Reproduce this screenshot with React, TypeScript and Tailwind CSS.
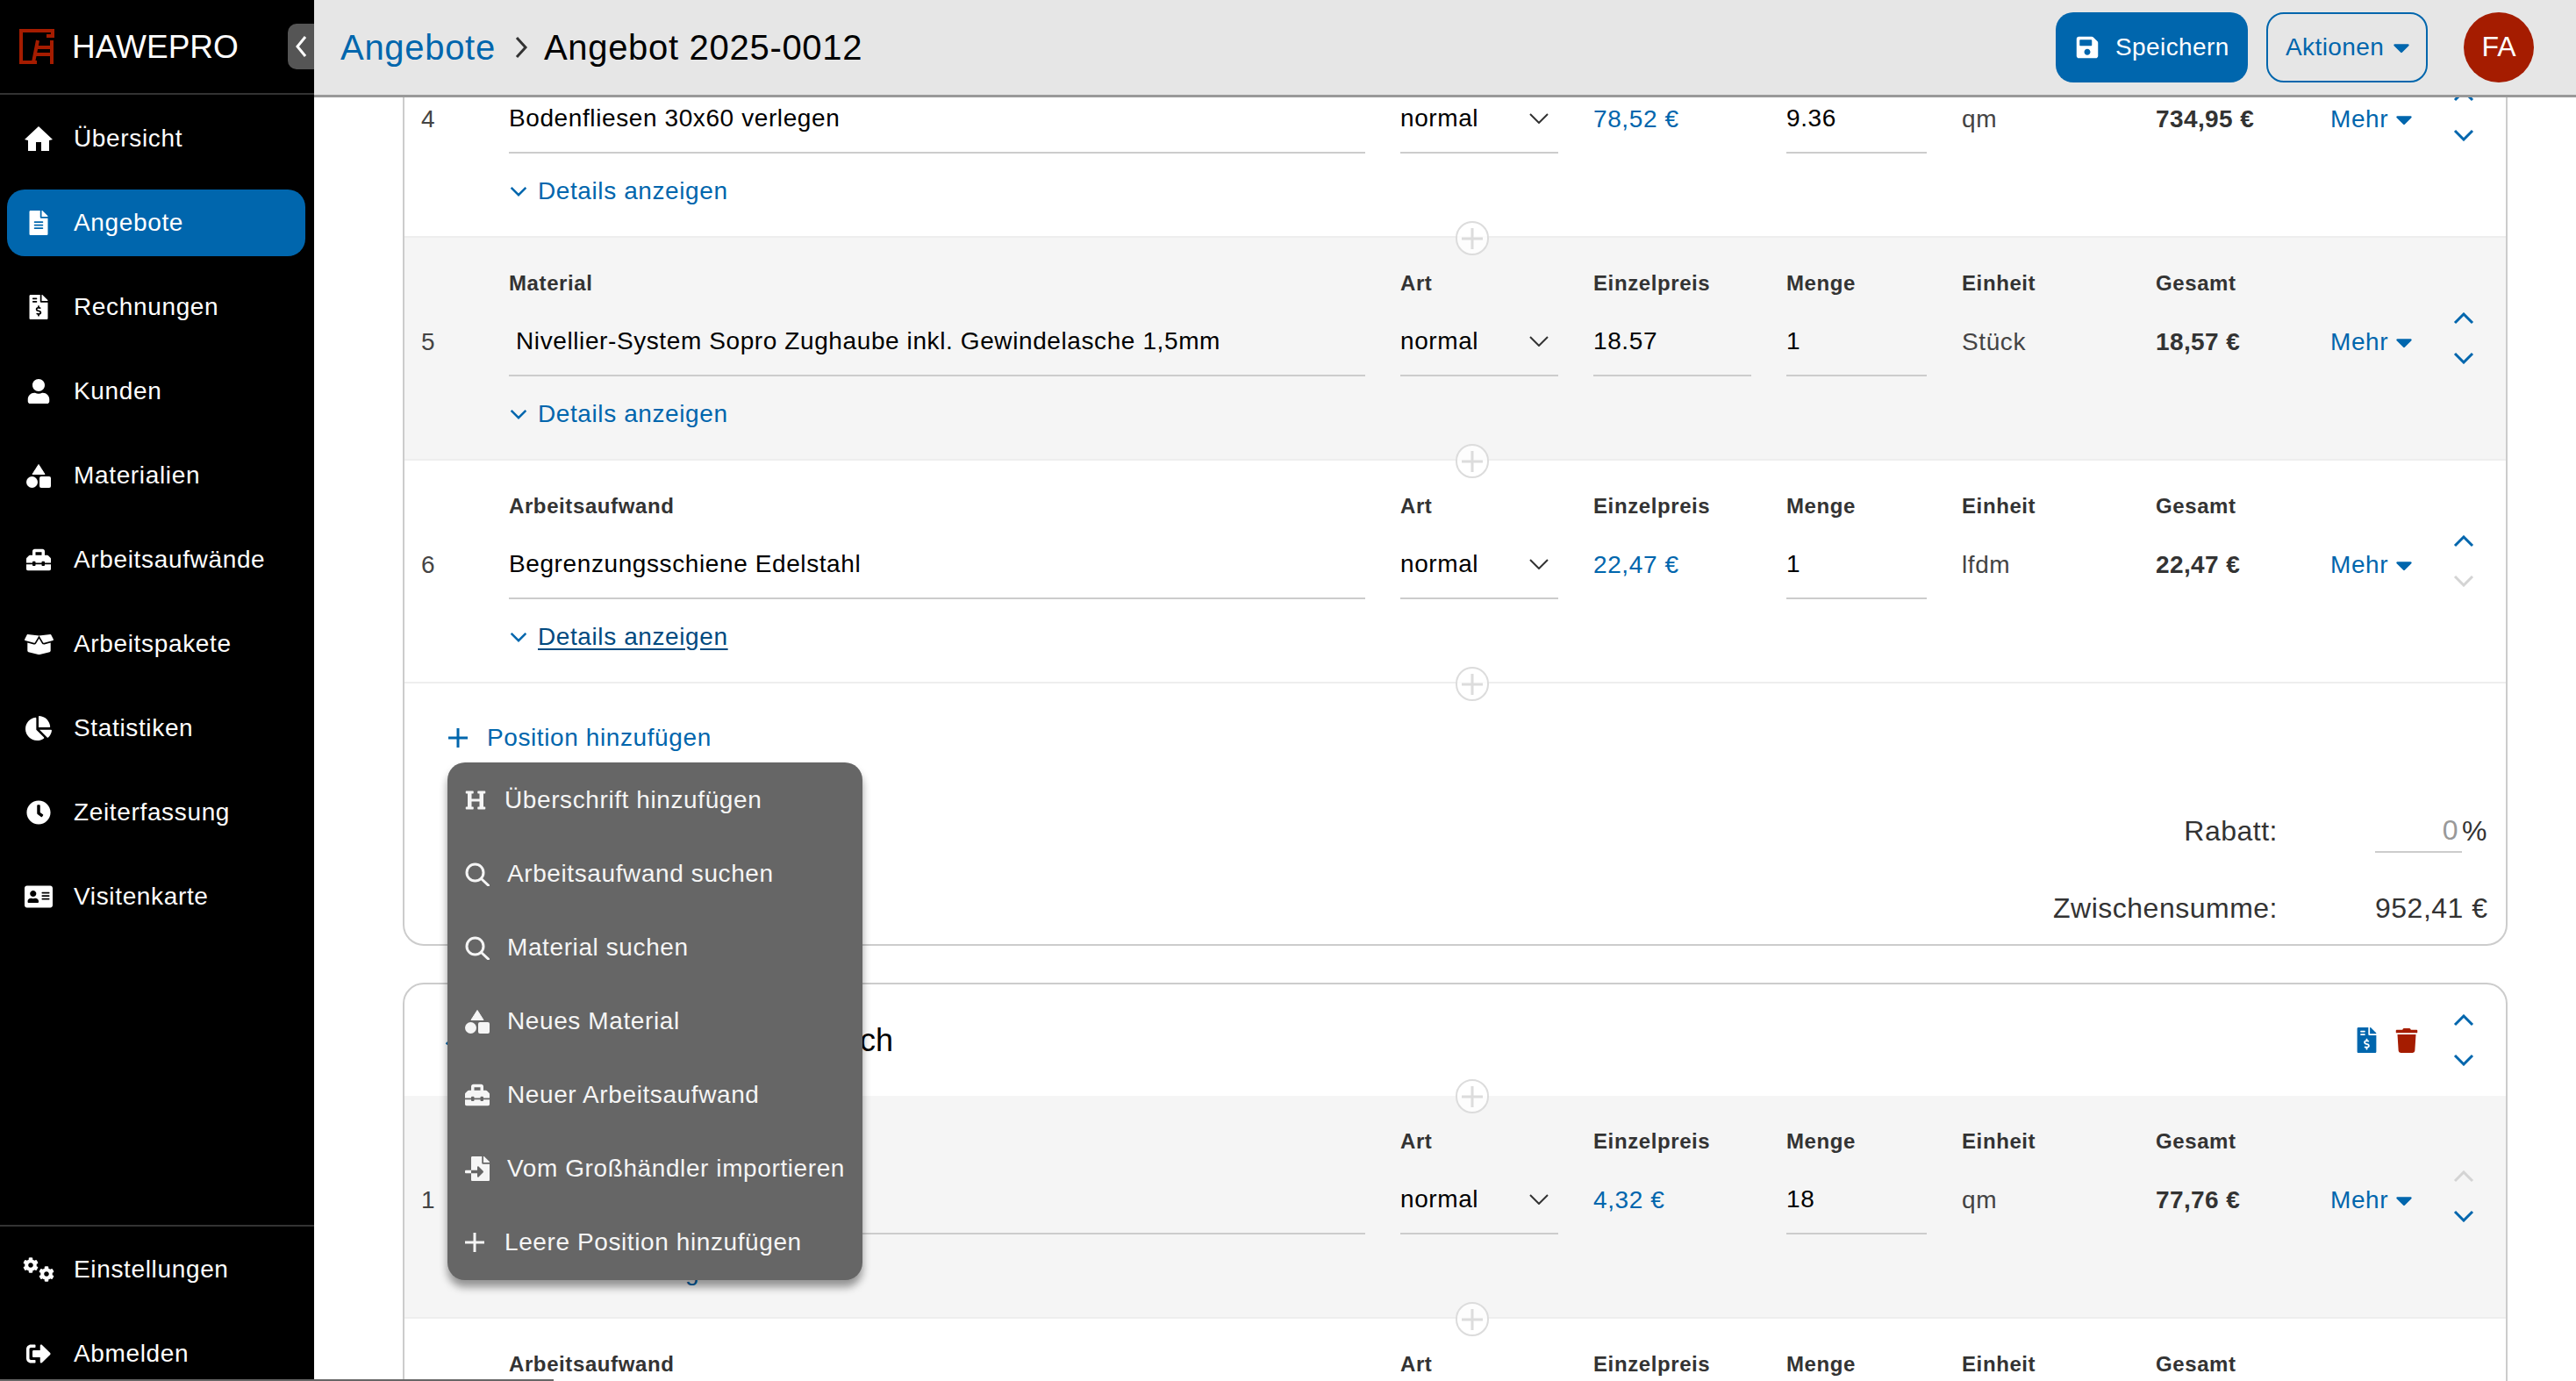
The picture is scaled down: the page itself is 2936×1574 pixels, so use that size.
import type { ReactNode } from 'react';
import {
  FaFileAlt, FaFileInvoiceDollar, FaUser, FaToolbox, FaBoxOpen, FaChartPie,
  FaClock, FaAddressCard, FaCog, FaSignOutAlt, FaSave, FaCaretDown, FaHeading,
  FaFileImport, FaTrash,
} from 'react-icons/fa';

const font = { fontFamily: '"Liberation Sans", Arial, sans-serif' };

function Chev({ down, muted, small }: { down?: boolean; muted?: boolean; small?: boolean }) {
  return (
    <svg
      viewBox="0 0 24 14"
      className={`${small ? 'w-[20px] h-[12px]' : 'w-[24px] h-[14px]'} ${down ? 'rotate-180' : ''} ${muted ? 'text-[#d4d4d4]' : 'text-[#0066ad]'}`}
      fill="none"
      stroke="currentColor"
      strokeWidth="3"
    >
      <path d="M2 12 L12 2 L22 12" />
    </svg>
  );
}

function PlusMark({ size, stroke, color }: { size: number; stroke: number; color: string }) {
  const mid = size / 2;
  return (
    <svg width={size} height={size} fill="none" stroke={color} strokeWidth={stroke} className="shrink-0">
      <path d={`M${mid} 0V${size}M0 ${mid}H${size}`} />
    </svg>
  );
}

function ShapesIcon() {
  return (
    <svg width="28" height="27" viewBox="0 0 28 27" fill="currentColor" className="shrink-0">
      <path d="M14 0.5 L21 11.5 H7 Z" stroke="currentColor" strokeWidth="1" strokeLinejoin="round" />
      <circle cx="6.5" cy="20.5" r="6.5" />
      <rect x="15" y="14" width="13" height="13" rx="2" />
    </svg>
  );
}

function HomeIcon() {
  return (
    <svg width="32" height="28" viewBox="0 0 32 28" fill="currentColor" className="shrink-0">
      <path d="M16 0 L32 15 L28 16 V28 H19 V18 H13 V28 H4 V16 L0 15 Z" />
    </svg>
  );
}

function SearchIcon() {
  return (
    <svg width="28" height="27" viewBox="0 0 28 27" fill="none" stroke="currentColor" strokeWidth="3" className="shrink-0">
      <circle cx="11.5" cy="11.5" r="9.5" />
      <path d="M18.5 18.5 L26.5 26" strokeLinecap="round" />
    </svg>
  );
}

function AddCircle({ flush }: { flush?: boolean }) {
  return (
    <div className={`absolute left-[1198px] z-10 w-[38px] h-[39px] rounded-full border-2 border-[#dcdcdc] bg-white/80 flex items-center justify-center ${flush ? '-bottom-[20px]' : '-bottom-[22px]'}`}>
      <PlusMark size={24} stroke={3} color="#dcdcdc" />
    </div>
  );
}

const navItems = [
  { label: 'Übersicht', icon: <HomeIcon /> },
  { label: 'Angebote', icon: <FaFileAlt size={28} />, active: true },
  { label: 'Rechnungen', icon: <FaFileInvoiceDollar size={28} /> },
  { label: 'Kunden', icon: <FaUser size={28} /> },
  { label: 'Materialien', icon: <ShapesIcon /> },
  { label: 'Arbeitsaufwände', icon: <FaToolbox size={28} /> },
  { label: 'Arbeitspakete', icon: <FaBoxOpen size={33} /> },
  { label: 'Statistiken', icon: <FaChartPie size={30} /> },
  { label: 'Zeiterfassung', icon: <FaClock size={28} /> },
  { label: 'Visitenkarte', icon: <FaAddressCard size={32} /> },
];

function NavItem({ label, icon, active }: { label: string; icon: ReactNode; active?: boolean }) {
  return (
    <div className={`ml-[8px] mr-[10px] h-[76px] shrink-0 flex items-center rounded-[20px] text-white text-[28px] tracking-[0.65px] ${active ? 'bg-[#0066ad]' : ''}`}>
      <div className="w-[72px] flex justify-center">{icon}</div>
      <span className="ml-[4px]">{label}</span>
    </div>
  );
}

function Sidebar() {
  return (
    <aside className="w-[358px] shrink-0 bg-black flex flex-col overflow-hidden">
      <div className="h-[108px] shrink-0 border-b-2 border-[#333] flex items-start pl-[22px] pt-[27px]">
        <svg width="40" height="40" viewBox="0 0 40 40" fill="none" stroke="#a51c00" strokeWidth="4" className="mt-[6px] shrink-0">
          <path d="M20 38H2V2H38V8H31" />
          <path d="M21 13L16 38M37 13V40M18 21H37M17 29H37" />
        </svg>
        <span className="ml-[20px] mt-[6px] text-white text-[37px] leading-[42px]">HAWEPRO</span>
        <div className="ml-auto w-[30px] h-[52px] bg-[#555] rounded-l-[10px] flex items-center justify-center">
          <svg width="14" height="26" viewBox="0 0 14 26" fill="none" stroke="white" strokeWidth="3">
            <path d="M12 2L3 13L12 24" />
          </svg>
        </div>
      </div>
      <nav className="flex-1 min-h-0 flex flex-col gap-[20px] pt-[12px]">
        {navItems.map((item) => (
          <NavItem key={item.label} {...item} />
        ))}
      </nav>
      <div className="h-[178px] shrink-0 border-t-2 border-[#333] flex flex-col gap-[20px] pt-[11px]">
        <NavItem
          label="Einstellungen"
          icon={
            <div className="w-[36px] h-[28px] flex justify-between">
              <FaCog size={18} className="self-start" />
              <FaCog size={18} className="self-end" />
            </div>
          }
        />
        <NavItem label="Abmelden" icon={<FaSignOutAlt size={28} />} />
      </div>
    </aside>
  );
}

function Header() {
  return (
    <header className="h-[111px] shrink-0 bg-[#e6e6e6] border-b-[3px] border-[#999] flex items-center pl-[30px] pr-[48px]">
      <span className="text-[#0066ad] text-[40px] tracking-[0.7px]">Angebote</span>
      <svg width="16" height="26" viewBox="0 0 16 26" fill="none" stroke="#333" strokeWidth="3" className="ml-[21px]">
        <path d="M3 2L13 13L3 24" />
      </svg>
      <span className="ml-[18px] text-black text-[40px] tracking-[0.7px]">Angebot 2025-0012</span>
      <button className="ml-auto w-[219px] h-[80px] rounded-[20px] bg-[#0066ad] text-white text-[28px] tracking-[0.4px] flex items-center pl-[22px]">
        <FaSave size={28} />
        <span className="ml-[18px]">Speichern</span>
      </button>
      <button className="ml-[21px] w-[184px] h-[80px] rounded-[20px] border-2 border-[#0066ad] text-[#0066ad] text-[28px] tracking-[0.4px] flex items-center pl-[20px]">
        Aktionen
        <FaCaretDown size={30} className="ml-[5px]" />
      </button>
      <div className="ml-[41px] w-[80px] h-[80px] rounded-full bg-[#a51c00] text-white text-[32px] flex items-center justify-center pb-[2px]">
        FA
      </div>
    </header>
  );
}

type RowProps = {
  nr: number;
  type: string;
  name: string;
  indent?: boolean;
  price: string;
  priceLink?: boolean;
  qty: string;
  unit: string;
  total: string;
  grey?: boolean;
  upMuted?: boolean;
  downMuted?: boolean;
  hoverDetails?: boolean;
};

function Label({ children }: { children: ReactNode }) {
  return <div className="h-[30px] leading-[30px] text-[24px] font-bold tracking-[0.6px] text-[#333]">{children}</div>;
}

function Row(p: RowProps) {
  const valueBox = 'mt-[13px] h-[78px] flex items-center text-[28px] tracking-[0.6px]';
  return (
    <div className={`relative h-[254px] shrink-0 flex pl-[19px] pt-[37px] border-b-2 border-[#eeeeee] ${p.grey ? 'bg-[#f5f5f5]' : 'bg-white'}`}>
      <div className="w-[100px] shrink-0">
        <div className="h-[30px]" />
        <div className={`${valueBox} text-[#444]`}>{p.nr}</div>
      </div>
      <div className="w-[976px] shrink-0 mr-[40px]">
        <Label>{p.type}</Label>
        <div className={`${valueBox} text-black border-b-2 border-[#cccccc] ${p.indent ? 'pl-[8px]' : ''}`}>{p.name}</div>
        <div className={`mt-[28px] h-[30px] flex items-center text-[28px] tracking-[0.6px] w-fit ${p.hoverDetails ? 'text-[#004a80] underline underline-offset-4' : 'text-[#0066ad]'}`}>
          <span className="ml-[1px] mr-[12px]"><Chev down small /></span>
          Details anzeigen
        </div>
      </div>
      <div className="w-[180px] shrink-0 mr-[40px]">
        <Label>Art</Label>
        <div className={`${valueBox} text-black justify-between border-b-2 border-[#cccccc]`}>
          normal
          <svg width="22" height="12" viewBox="0 0 22 12" fill="none" stroke="#333" strokeWidth="2" className="mr-[11px]">
            <path d="M1 1L11 11L21 1" />
          </svg>
        </div>
      </div>
      <div className="w-[180px] shrink-0 mr-[40px]">
        <Label>Einzelpreis</Label>
        <div className={`${valueBox} ${p.priceLink ? 'text-[#0066ad]' : 'text-black border-b-2 border-[#cccccc]'}`}>{p.price}</div>
      </div>
      <div className="w-[160px] shrink-0 mr-[40px]">
        <Label>Menge</Label>
        <div className={`${valueBox} text-black border-b-2 border-[#cccccc]`}>{p.qty}</div>
      </div>
      <div className="w-[221px] shrink-0">
        <Label>Einheit</Label>
        <div className={`${valueBox} text-[#444]`}>{p.unit}</div>
      </div>
      <div className="w-[199px] shrink-0">
        <Label>Gesamt</Label>
        <div className={`${valueBox} font-bold text-[#333] !tracking-[0.4px]`}>{p.total}</div>
      </div>
      <div className="w-[140px] shrink-0">
        <div className="h-[30px]" />
        <div className={`${valueBox} text-[#0066ad]`}>
          Mehr
          <FaCaretDown size={30} className="ml-[3px]" />
        </div>
      </div>
      <div className="w-[24px] shrink-0 pt-[41px] flex flex-col items-center gap-[17px]">
        <div className="h-[28px] flex items-center"><Chev muted={p.upMuted} /></div>
        <div className="h-[28px] flex items-center"><Chev down muted={p.downMuted} /></div>
      </div>
      <AddCircle />
    </div>
  );
}

const menuItems = [
  { label: 'Überschrift hinzufügen', icon: <FaHeading size={24} />, narrow: true },
  { label: 'Arbeitsaufwand suchen', icon: <SearchIcon /> },
  { label: 'Material suchen', icon: <SearchIcon /> },
  { label: 'Neues Material', icon: <ShapesIcon /> },
  { label: 'Neuer Arbeitsaufwand', icon: <FaToolbox size={28} /> },
  { label: 'Vom Großhändler importieren', icon: <FaFileImport size={28} /> },
  { label: 'Leere Position hinzufügen', icon: <PlusMark size={22} stroke={3} color="#f5f5f5" />, narrow: true },
];

function AddMenu() {
  return (
    <div className="absolute left-0 top-full mt-[8px] py-[1px] z-20 w-[473px] rounded-[20px] bg-[#666666] text-[#f5f5f5] text-[28px] tracking-[0.6px] shadow-[0_8px_10px_rgba(0,0,0,0.4)]">
      {menuItems.map((item) => (
        <div key={item.label} className="h-[84px] flex items-center pl-[20px] whitespace-nowrap">
          <div className="w-[28px] flex justify-start">{item.icon}</div>
          <span className={item.narrow ? 'ml-[17px]' : 'ml-[20px]'}>{item.label}</span>
        </div>
      ))}
    </div>
  );
}

function Content() {
  return (
    <div className="flex-1 min-h-0 overflow-hidden pl-[101px] pr-[78px]">
      <div className="-mt-[94px] flex flex-col gap-[42px]">
        <section className="border-2 border-t-0 border-[#cccccc] rounded-b-[24px] flex flex-col">
          <Row nr={4} type="Arbeitsaufwand" name="Bodenfliesen 30x60 verlegen" price="78,52 €" priceLink qty="9.36" unit="qm" total="734,95 €" />
          <Row nr={5} type="Material" name="Nivellier-System Sopro Zughaube inkl. Gewindelasche 1,5mm" indent price="18.57" qty="1" unit="Stück" total="18,57 €" grey />
          <Row nr={6} type="Arbeitsaufwand" name="Begrenzungsschiene Edelstahl" price="22,47 €" priceLink qty="1" unit="lfdm" total="22,47 €" downMuted hoverDetails />
          <div className="h-[297px] pt-[42px] text-[32px] tracking-[0.5px] text-[#333]">
            <div className="relative ml-[49px] w-fit h-[40px] flex items-center pl-[1px] text-[#0066ad] text-[28px] tracking-[0.6px]">
              <PlusMark size={22} stroke={3} color="#0066ad" />
              <span className="ml-[22px]">Position hinzufügen</span>
              <AddMenu />
            </div>
            <div className="mt-[61px] h-[50px] flex items-center justify-end pr-[21px]">
              <span>Rabatt:</span>
              <div className="ml-[111px] w-[99px] h-[50px] border-b-2 border-[#cccccc] flex items-center justify-end pr-[4px] text-[#999]">0</div>
              <span className="w-[29px] text-right">%</span>
            </div>
            <div className="mt-[38px] h-[50px] flex items-center justify-end pr-[21px]">
              <span>Zwischensumme:</span>
              <span className="ml-[111px] w-[128px] text-right whitespace-nowrap">952,41 €</span>
            </div>
          </div>
        </section>

        <section className="border-2 border-[#cccccc] rounded-t-[24px] flex flex-col">
          <div className="relative h-[127px] shrink-0 flex items-center pl-[46px]">
            <Chev small />
            <div className="w-[491px] text-right text-[36px] text-black whitespace-nowrap">Fliesen Badbereich</div>
            <div className="ml-auto flex items-center gap-[17px] text-[#0066ad]">
              <FaFileInvoiceDollar size={29} />
              <FaTrash size={28} className="text-[#a51c00]" />
            </div>
            <div className="ml-[39px] mr-[36px] w-[24px] flex flex-col items-center gap-[17px]">
              <div className="h-[28px] flex items-center"><Chev /></div>
              <div className="h-[28px] flex items-center"><Chev down /></div>
            </div>
            <AddCircle flush />
          </div>
          <Row nr={1} type="Material" name="Bodenfliese 30x60" price="4,32 €" priceLink qty="18" unit="qm" total="77,76 €" grey upMuted />
          <Row nr={2} type="Arbeitsaufwand" name="" price="" priceLink qty="" unit="" total="" />
        </section>
      </div>
    </div>
  );
}

export default function App() {
  return (
    <div className="relative w-[2936px] h-[1574px] flex overflow-hidden bg-white" style={font}>
      <Sidebar />
      <main className="flex-1 min-w-0 flex flex-col">
        <Header />
        <Content />
      </main>
      <div className="absolute left-0 bottom-0 w-[631px] h-[2px] bg-[#666]" />
    </div>
  );
}
